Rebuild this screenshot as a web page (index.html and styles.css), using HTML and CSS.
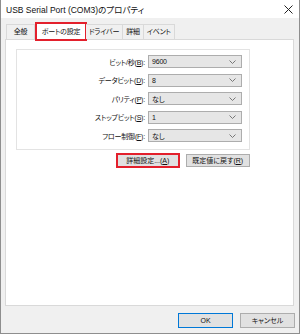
FILE: index.html
```html
<!doctype html>
<html lang="ja">
<head>
<meta charset="utf-8">
<title>USB Serial Port (COM3)のプロパティ</title>
<meta name="viewport" content="width=device-width, initial-scale=1">
<link rel="stylesheet" href="styles.css">
</head>
<body>

<div class="window">
  <div class="titlebar">
    <span class="title">USB Serial Port (COM3)のプロパティ</span>
    <svg class="close" width="9" height="9" viewBox="0 0 9 9"><path d="M0.5 0.5L8.5 8.5M8.5 0.5L0.5 8.5" stroke="#222" stroke-width="1" fill="none"/></svg>
  </div>

  <div class="body">
    <!-- tabs -->
    <div class="tabs">
      <div class="tab first">全般</div>
      <div class="tab active mark">ポートの設定</div>
      <div class="tab">ドライバー</div>
      <div class="tab">詳細</div>
      <div class="tab">イベント</div>
    </div>

    <div class="panel">
      <div class="group">
        <div class="row">
          <label>ビット/秒(<u>B</u>):</label>
          <div class="select"><span>9600</span><svg width="7" height="4" viewBox="0 0 7 4"><path d="M0.5 0.5L3.5 3.5L6.5 0.5" stroke="#777" fill="none"/></svg></div>
        </div>
        <div class="row">
          <label>データビット(<u>D</u>):</label>
          <div class="select"><span>8</span><svg width="7" height="4" viewBox="0 0 7 4"><path d="M0.5 0.5L3.5 3.5L6.5 0.5" stroke="#777" fill="none"/></svg></div>
        </div>
        <div class="row">
          <label>パリティ(<u>P</u>):</label>
          <div class="select"><span>なし</span><svg width="7" height="4" viewBox="0 0 7 4"><path d="M0.5 0.5L3.5 3.5L6.5 0.5" stroke="#777" fill="none"/></svg></div>
        </div>
        <div class="row">
          <label>ストップビット(<u>S</u>):</label>
          <div class="select"><span>1</span><svg width="7" height="4" viewBox="0 0 7 4"><path d="M0.5 0.5L3.5 3.5L6.5 0.5" stroke="#777" fill="none"/></svg></div>
        </div>
        <div class="row">
          <label>フロー制御(<u>F</u>):</label>
          <div class="select"><span>なし</span><svg width="7" height="4" viewBox="0 0 7 4"><path d="M0.5 0.5L3.5 3.5L6.5 0.5" stroke="#777" fill="none"/></svg></div>
        </div>
      </div>

      <div class="actions">
        <button class="btn mark wide">詳細設定...(<u>A</u>)</button>
        <button class="btn wide">既定値に戻す(<u>R</u>)</button>
      </div>
    </div>
  </div>

  <div class="footer">
    <button class="btn big default">OK</button>
    <button class="btn big">キャンセル</button>
  </div>
</div>

</body>
</html>
```

FILE: styles.css
```css
:root{
  --c-face:#f0f0f0;
  --c-line:#d9d9d9;
  --c-ctrl:#e1e1e1;
  --c-ctrl-line:#adadad;
  --c-mark:#e3202c;
  --c-blue:#0078d7;
}
*{box-sizing:border-box;margin:0;padding:0;}
body{
  font-family:"Liberation Sans","Noto Sans CJK JP",sans-serif;
  font-size:7px;
  letter-spacing:-0.2px;
  font-feature-settings:"palt";
  color:#111;
  background:#fff;
}
u{text-decoration:underline;text-underline-offset:1px;}

.window{
  width:300px;height:334px;
  display:flex;flex-direction:column;
  border:1px solid #8e8e8e;border-top:none;
  background:var(--c-face);
}
.titlebar{
  height:18px;background:#fff;
  display:flex;align-items:center;justify-content:space-between;
  padding:0 6px 0 5px;
}
.title{font-size:8.5px;letter-spacing:0;color:#111;}

.body{flex:1;display:flex;flex-direction:column;padding:5px 5px 0 4px;}

/* tabs */
.tabs{display:flex;align-items:flex-end;height:16px;position:relative;z-index:1;}
.tab{
  height:15px;line-height:14px;padding:0 3px;
  background:var(--c-face);
  border:1px solid var(--c-line);border-bottom:none;border-left:none;
  white-space:nowrap;
}
.tab.first{border-left:1px solid var(--c-line);margin-left:1px;width:29px;text-align:center;}
.tab.active{
  width:50px;text-align:center;
  height:17px;background:#fff;
  border-left:1px solid var(--c-line);
  margin-left:1px;margin-bottom:-1px;padding:0;
  line-height:16px;
}
.mark{outline:2px solid var(--c-mark);outline-offset:-1px;}

.panel{
  flex:1;background:#fff;
  border:1px solid var(--c-line);
  padding:9px 43px 0 10px;
}
.group{
  border:1px solid #e3e3e3;
  padding:5px 7px 7px 0;
  display:flex;flex-direction:column;gap:5.5px;
}
.row{display:flex;align-items:center;gap:3px;}
.row label{width:128px;text-align:right;white-space:nowrap;}
.select{
  flex:1;height:13px;
  display:flex;align-items:center;justify-content:space-between;
  padding:0 5px 0 3px;
  background:#e6e6e6;border:1px solid var(--c-ctrl-line);
}

.actions{display:flex;gap:7px;padding:4px 0 0 101px;}
.btn{
  font:inherit;color:#111;
  height:13px;line-height:11px;
  white-space:nowrap;
  background:var(--c-ctrl);border:1px solid var(--c-ctrl-line);
}
.btn.wide{width:62px;}
.btn.wide + .btn.wide{width:65px;}

.footer{display:flex;justify-content:flex-end;gap:7px;padding:7px 4px 5px 0;}
.btn.big{width:55px;height:15px;line-height:13px;}
.btn.default{border-color:var(--c-blue);}
```
